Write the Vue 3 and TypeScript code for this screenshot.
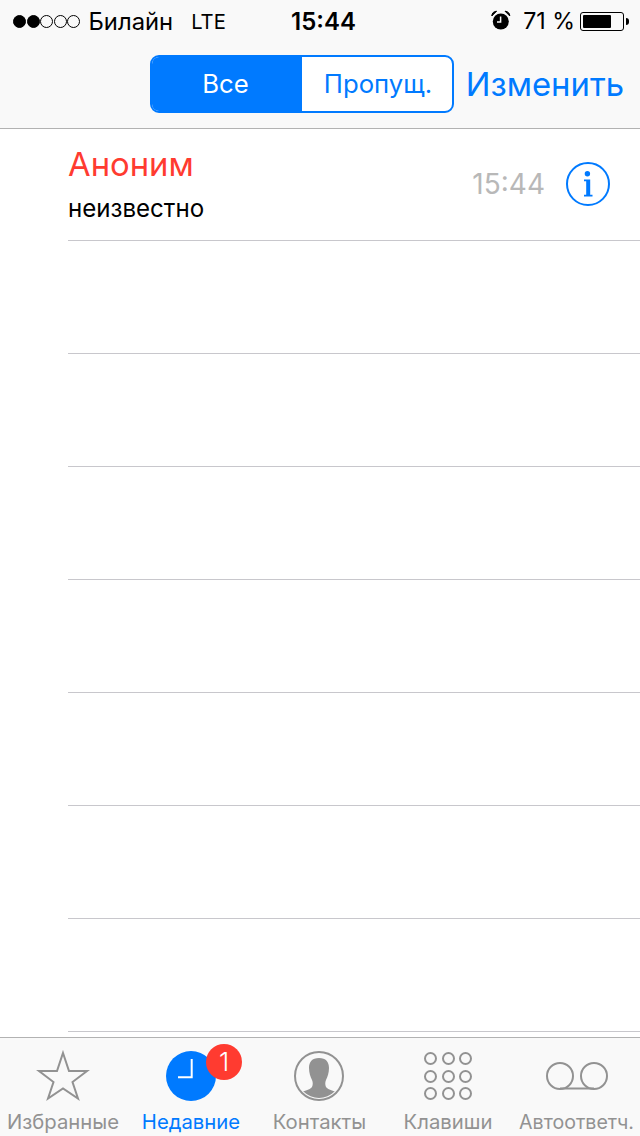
<script setup lang="ts">
const emptyRows: number[] = [1, 2, 3, 4, 5, 6, 7]
const keys: number[] = [0, 1, 2, 3, 4, 5, 6, 7, 8]
</script>

<template>
  <div class="phone">
    <header class="top">
      <div class="status">
        <div class="status-left">
          <div class="signal">
            <i class="dot on"></i><i class="dot on"></i><i class="dot"></i><i class="dot"></i><i class="dot"></i>
          </div>
          <span class="carrier">Билайн</span>
          <span class="net">LTE</span>
        </div>
        <div class="clock">15:44</div>
        <div class="status-right">
          <svg class="alarm" width="20" height="20" viewBox="0 0 20 20">
            <circle cx="9.8" cy="11.5" r="8" fill="#000" />
            <path d="M0.8 6 Q1 1.6 5.6 1.2 Z M18.8 6 Q18.6 1.6 14 1.2 Z" fill="#000" stroke="#000" stroke-width="1" />
            <path d="M9.6 6.5 V12 H6" fill="none" stroke="#fafafa" stroke-width="1.5" />
          </svg>
          <span class="pct">71 %</span>
          <div class="battery"><div class="level"></div></div>
          <div class="nub"></div>
        </div>
      </div>
      <nav class="nav">
        <div class="segments">
          <div class="seg seg-on">Все</div>
          <div class="seg seg-off">Пропущ.</div>
        </div>
        <div class="edit">Изменить</div>
      </nav>
    </header>

    <main class="list">
      <div class="row call">
        <div class="call-text">
          <div class="name">Аноним</div>
          <div class="kind">неизвестно</div>
        </div>
        <div class="time">15:44</div>
        <svg class="info" width="46" height="46" viewBox="0 0 46 46">
          <circle cx="23" cy="23" r="21" fill="none" stroke="#007aff" stroke-width="2" />
          <circle cx="22.4" cy="12.8" r="2.7" fill="#007aff" />
          <path d="M19 18.5 H25.2 V33.7 H27.5 V35.5 H19 V33.7 H21.2 V20.3 H19 Z" fill="#007aff" />
        </svg>
      </div>
      <div v-for="r in emptyRows" :key="r" class="row"></div>
    </main>

    <footer class="tabs">
      <div class="tab">
        <svg class="ico" width="56" height="54" viewBox="0 0 56 54">
          <path d="M28 4 L34 22 H52 L37.5 33 L43 49.5 L28 39.5 L13 49.5 L18.5 33 L4 22 H22 Z" fill="none" stroke="#929292" stroke-width="2" />
        </svg>
        <span class="tab-label">Избранные</span>
      </div>
      <div class="tab active">
        <div class="recent">
          <svg class="ico" width="56" height="54" viewBox="0 0 56 54">
            <circle cx="28" cy="27" r="25" fill="#007aff" />
            <path d="M28.7 10 V28.2 H15" fill="none" stroke="#fff" stroke-width="2" />
          </svg>
          <span class="badge">1</span>
        </div>
        <span class="tab-label">Недавние</span>
      </div>
      <div class="tab">
        <svg class="ico" width="56" height="54" viewBox="1 0 56 54">
          <defs>
            <clipPath id="contact-clip"><circle cx="28" cy="27" r="22" /></clipPath>
          </defs>
          <circle cx="28" cy="27" r="24" fill="none" stroke="#929292" stroke-width="2" />
          <path clip-path="url(#contact-clip)" d="M28 9 C35 9 38 13 38 19 C38 24 36.5 28 35 31 C34 33 34 36 35 38 C37 41 44 41.5 50 46 V54 H6 V46 C12 41.5 19 41 21 38 C22 36 22 33 21 31 C19.5 28 18 24 18 19 C18 13 21 9 28 9 Z" fill="#929292" />
        </svg>
        <span class="tab-label">Контакты</span>
      </div>
      <div class="tab">
        <div class="keypad">
          <i v-for="k in keys" :key="k" class="key"></i>
        </div>
        <span class="tab-label">Клавиши</span>
      </div>
      <div class="tab">
        <svg class="ico" width="66" height="54" viewBox="0 0 66 54">
          <circle cx="16" cy="27" r="13" fill="none" stroke="#929292" stroke-width="2" />
          <circle cx="50" cy="27" r="13" fill="none" stroke="#929292" stroke-width="2" />
          <path d="M16 39.5 H50" fill="none" stroke="#929292" stroke-width="2" />
        </svg>
        <span class="tab-label narrow">Автоответч.</span>
      </div>
    </footer>
  </div>
</template>

<style>
html, body { margin: 0; padding: 0; background: #fff; }
</style>

<style scoped>
.phone {
  width: 640px;
  height: 1136px;
  display: flex;
  flex-direction: column;
  overflow: hidden;
  background: #fff;
  font-family: Inter, "Liberation Sans", sans-serif;
  color: #000;
}
.top {
  height: 128px;
  flex: none;
  background: #f9f9f9;
  border-bottom: 1px solid #b2b2b2;
}
.status {
  height: 42px;
  margin-bottom: -2px;
  padding: 0 11px 0 13px;
  display: flex;
  align-items: center;
  font-size: 23px;
}
.status-left { display: flex; align-items: center; width: 278px; flex: none; }
.signal { display: flex; gap: 0.5px; margin-right: 8.5px; }
.dot {
  width: 13px;
  height: 13px;
  box-sizing: border-box;
  border-radius: 50%;
  border: 1px solid #000;
}
.dot.on { background: #000; }
.carrier { margin-right: 18px; font-size: 23.8px; }
.net { font-size: 20.2px; }
.clock { font-weight: 600; font-size: 24px; }
.status-right { flex: 1; display: flex; align-items: center; justify-content: flex-end; }
.alarm { margin-right: 12px; margin-bottom: 2px; }
.pct { margin-right: 5px; font-size: 23.2px; }
.battery {
  width: 44px;
  height: 19px;
  box-sizing: border-box;
  border: 1px solid #000;
  border-radius: 3px;
  padding: 2px;
}
.level { width: 28px; height: 100%; background: #000; border-radius: 1px; }
.nub {
  width: 3px;
  height: 7px;
  margin-left: 2px;
  background: #000;
  border-radius: 0 3px 3px 0;
}
.nav {
  height: 88px;
  padding: 0 16px 0 150px;
  display: flex;
  align-items: flex-start;
  justify-content: space-between;
}
.segments {
  margin-top: 15px;
  width: 304px;
  height: 58px;
  box-sizing: border-box;
  display: flex;
  border: 2px solid #007aff;
  border-radius: 9px;
  overflow: hidden;
  background: #fff;
  font-size: 25.7px;
}
.seg { display: flex; align-items: center; justify-content: center; padding-bottom: 2px; }
.seg-on { width: 147px; padding-right: 3px; background: #007aff; color: #fff; }
.seg-off { flex: 1; color: #007aff; padding-left: 2px; }
.edit { margin-top: 22px; font-size: 32.8px; line-height: 44px; color: #007aff; }
.list { flex: 1; min-height: 0; overflow: hidden; }
.row {
  height: 113px;
  box-sizing: border-box;
  margin-left: 68px;
  border-bottom: 1px solid #c8c7cc;
}
.row.call {
  height: 112px;
  display: flex;
  align-items: center;
  padding-right: 29px;
}
.call-text { flex: 1; padding-top: 2px; }
.name { font-size: 32.8px; line-height: 40px; color: #ff3b30; margin-top: -4px; }
.kind { font-size: 24.1px; line-height: 30px; margin-top: 10px; }
.time { font-size: 28px; color: #b8b8b8; margin-right: 20px; margin-bottom: 2px; }
.info { display: block; margin-bottom: 2px; }
.tabs {
  height: 99px;
  flex: none;
  box-sizing: border-box;
  background: #f9f9f9;
  border-top: 1px solid #b2b2b2;
  display: grid;
  grid-template-columns: 126px 130px 127px 130px 127px;
}
.tab {
  display: flex;
  flex-direction: column;
  align-items: center;
  color: #929292;
}
.tab.active { color: #007aff; }
.ico { display: block; margin-top: 11px; }
.tab-label { font-size: 20.3px; line-height: 24px; margin-top: 7px; white-space: nowrap; }
.tab-label.narrow { font-size: 19.6px; }
.recent { position: relative; height: 65px; }
.badge {
  position: absolute;
  left: 43px;
  top: 6px;
  width: 36px;
  height: 36px;
  border-radius: 50%;
  background: #ff3b30;
  color: #fff;
  font-size: 26px;
  font-weight: 300;
  line-height: 36px;
  text-align: center;
}
.keypad {
  margin-top: 14px;
  height: 49px;
  display: grid;
  grid-template-columns: repeat(3, 13px);
  grid-auto-rows: 13px;
  gap: 4.5px;
  align-content: start;
  padding-bottom: 2px;
}
.key {
  box-sizing: border-box;
  border: 2px solid #929292;
  border-radius: 50%;
}
</style>
